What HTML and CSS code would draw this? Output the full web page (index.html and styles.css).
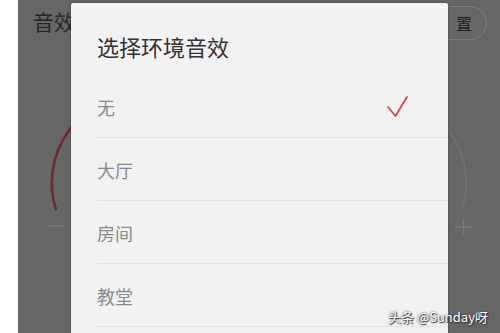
FILE: index.html
```html
<!DOCTYPE html>
<html lang="zh">
<head>
<meta charset="utf-8">
<link rel="stylesheet" href="styles.css">
</head>
<body>
<div class="screen">
  <div class="strip"></div>
  <div class="page">
    <div class="page-head">
      <span class="page-title">音效</span>
      <span class="pill">置</span>
    </div>
    <svg class="dial" width="482" height="333" viewBox="0 0 482 333">
      <path d="M 38 210 A 89 89 0 0 1 122 94" fill="none" stroke="#6a2a2e" stroke-width="2.5"/>
      <path d="M 360 95 A 88 88 0 0 1 444 210" fill="none" stroke="#727272" stroke-width="1.5"/>
      <line x1="30" y1="226" x2="46" y2="226" stroke="#7a7a7a" stroke-width="1.5"/>
      <line x1="437" y1="227" x2="454" y2="227" stroke="#7a7a7a" stroke-width="1.5"/>
      <line x1="445.5" y1="219" x2="445.5" y2="235" stroke="#7a7a7a" stroke-width="1.5"/>
    </svg>
  </div>

  <div class="dialog">
    <div class="dialog-title">选择环境音效</div>
    <ul class="options">
      <li class="option">
        <span>无</span>
        <svg class="check" width="24" height="24" viewBox="0 0 24 24">
          <polyline points="2,12 9.5,21 21,2" fill="none" stroke="#d9464c" stroke-width="1.8" stroke-linecap="round" stroke-linejoin="round"/>
        </svg>
      </li>
      <li class="option"><span>大厅</span></li>
      <li class="option"><span>房间</span></li>
      <li class="option"><span>教堂</span></li>
    </ul>
  </div>

  <div class="watermark">头条 @Sunday呀</div>
</div>
</body>
</html>
```

FILE: styles.css
```css
html, body {
  margin: 0;
  padding: 0;
  background: #ffffff;
}

body {
  font-family: "Noto Sans CJK SC", "Noto Sans", sans-serif;
}

.screen {
  position: relative;
  width: 500px;
  height: 333px;
  display: flex;
  overflow: hidden;
}

.strip {
  width: 18px;
  flex: none;
  background: #ffffff;
}

.page {
  position: relative;
  flex: 1;
  background: #656665;
}

.page-head {
  display: flex;
  justify-content: space-between;
  align-items: center;
  padding: 5px 13px 0 15px;
  height: 35px;
}

.page-title {
  font-size: 21px;
  color: #262626;
  line-height: 26px;
  margin-top: -4px;
}

.pill {
  width: 78px;
  height: 34px;
  box-sizing: border-box;
  border: 1px solid #7c7c7c;
  border-radius: 17px;
  font-size: 16px;
  color: #202020;
  display: flex;
  align-items: center;
  justify-content: flex-end;
  padding-right: 14px;
}

.dial {
  position: absolute;
  left: 0;
  top: 0;
}

.dialog {
  position: absolute;
  left: 71px;
  top: 3px;
  width: 377px;
  height: 340px;
  background: #f2f2f2;
  border-radius: 2px;
  box-shadow: 0 0 3px rgba(0, 0, 0, 0.35);
}

.dialog-title {
  padding: 30px 0 0 26px;
  font-size: 22px;
  line-height: 26px;
  color: #333333;
}

.options {
  list-style: none;
  margin: 16px 0 0 26px;
  padding: 0;
}

.option {
  height: 62px;
  border-bottom: 1px solid #e2e2e2;
  display: flex;
  align-items: center;
  justify-content: space-between;
  font-size: 18px;
  color: #8a8a8a;
  padding-right: 38px;
}

.option span {
  margin-top: 2px;
}

.check {
  margin-top: 2px;
}

.watermark {
  position: absolute;
  left: 388px;
  top: 307px;
  font-size: 13px;
  line-height: 20px;
  color: #ffffff;
  white-space: nowrap;
  text-shadow: 0 0 2px #333, 1px 1px 1px #333;
}
```
